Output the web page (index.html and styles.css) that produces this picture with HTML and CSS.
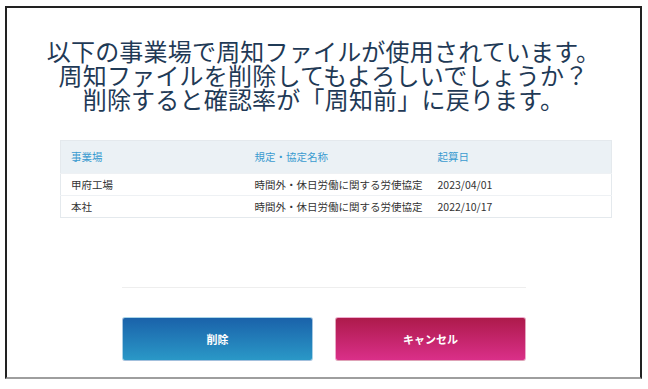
FILE: index.html
```html
<!DOCTYPE html>
<html lang="ja">
<head>
  <meta charset="UTF-8">
  <title>周知ファイル削除確認</title>
  <link rel="stylesheet" href="styles.css">
</head>
<body>
  <div class="frame">
    <h1 class="message">
      以下の事業場で周知ファイルが使用されています。<br>
      周知ファイルを削除してもよろしいでしょうか？<br>
      削除すると確認率が「周知前」に戻ります。
    </h1>

    <table class="sites">
      <colgroup>
        <col class="col-site">
        <col class="col-name">
        <col>
      </colgroup>
      <thead>
        <tr>
          <th>事業場</th>
          <th>規定・協定名称</th>
          <th>起算日</th>
        </tr>
      </thead>
      <tbody>
        <tr>
          <td>甲府工場</td>
          <td>時間外・休日労働に関する労使協定</td>
          <td>2023/04/01</td>
        </tr>
        <tr>
          <td>本社</td>
          <td>時間外・休日労働に関する労使協定</td>
          <td>2022/10/17</td>
        </tr>
      </tbody>
    </table>

    <div class="actions">
      <hr class="divider">
      <div class="buttons">
        <button class="btn btn-delete">削除</button>
        <button class="btn btn-cancel">キャンセル</button>
      </div>
    </div>
  </div>
</body>
</html>
```

FILE: styles.css
```css
body {
  margin: 0;
  background: #fff;
  font-family: "Noto Sans CJK JP", "Noto Sans", sans-serif;
}

.frame {
  box-sizing: border-box;
  margin: 6px 0 0 5px;
  width: 637px;
  height: 373px;
  border: 2px solid #222;
  border-bottom-color: #9e9e9e;
  overflow: hidden;
}

.message {
  margin: 31px 0 0;
  font-size: 24px;
  line-height: 24px;
  font-weight: 400;
  color: #1f3a56;
  text-align: center;
  letter-spacing: 0.2px;
}

.sites {
  margin: 29px 0 0 53px;
  width: 552px;
  table-layout: fixed;
  border-collapse: collapse;
  border: 1px solid #e4e9ed;
  font-size: 10.5px;
  line-height: 14px;
}

.col-site {
  width: 184px;
}

.col-name {
  width: 183px;
}

.sites th,
.sites td {
  padding: 0 0 0 10px;
  text-align: left;
  white-space: nowrap;
}

.sites th {
  background: #ebf1f5;
  color: #3a9bd0;
  font-weight: 400;
  height: 32px;
}

.sites td {
  color: #333;
  height: 21px;
  border-top: 1px solid #eef1f4;
}

.actions {
  width: 404px;
  margin-left: 115px;
}

.divider {
  margin: 69px 0 0;
  border: 0;
  border-top: 1px solid #eeeeee;
}

.buttons {
  display: flex;
  gap: 22px;
  margin-top: 29px;
}

.btn {
  flex: 1;
  height: 44px;
  border: 1px solid rgba(255, 255, 255, 0.6);
  border-radius: 3px;
  color: #fff;
  font-family: inherit;
  font-size: 11px;
  font-weight: 700;
  cursor: pointer;
}

.btn-delete {
  background: linear-gradient(#1a62aa, #2a98c7);
}

.btn-cancel {
  background: linear-gradient(#ad1a4b, #da2f89);
}
```
